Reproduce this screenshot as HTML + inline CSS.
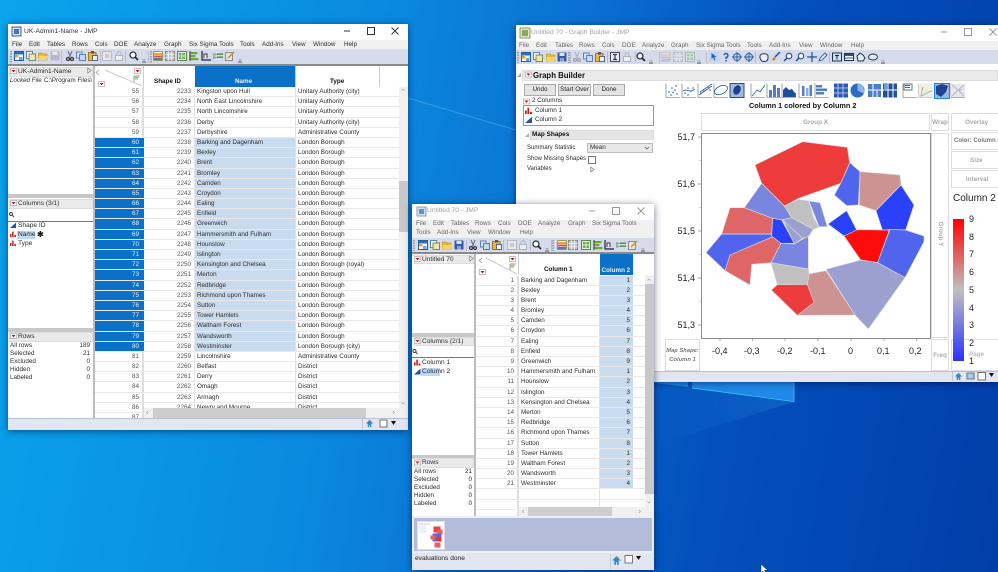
<!DOCTYPE html>
<html><head><meta charset="utf-8"><title>JMP</title>
<style>
html,body{margin:0;padding:0}
body{width:998px;height:572px;overflow:hidden;position:relative;font-family:"Liberation Sans",sans-serif;font-size:6.3px;color:#2c2c2c;background:linear-gradient(100deg,#0aa4ec 0,#0a8ae0 35%,#0a6ed0 55%,#0350bc 72%,#023eaa 100%)}
#p{position:absolute;left:0;top:0;width:998px;height:572px;filter:blur(.3px)}
.a,.t,.w{position:absolute}
.t{white-space:nowrap;line-height:10px;height:10px}
.w{background:#fff;box-shadow:0 1px 7px rgba(0,0,40,.55)}
.g{color:#a3a3a3}.b{font-weight:bold;color:#111}
.bar{position:absolute;background:#eaeaea;border:1px solid #ddd;box-sizing:border-box}
.box{position:absolute;border:1px solid #ddd;box-sizing:border-box;color:#aaa;text-align:center;font-weight:bold;background:#fff;display:flex;align-items:center;justify-content:center;font-size:6.3px}
.btn{position:absolute;background:#e4e4e4;border:1px solid #aaa;box-sizing:border-box;text-align:center;line-height:10px;height:12px;color:#222}
.rows{position:absolute;overflow:hidden}
.r{display:flex;box-sizing:border-box;border-bottom:1px solid #e9e9e9}
.r span{display:block;height:100%;box-sizing:border-box;white-space:nowrap;overflow:hidden}
.r1{height:10.19px;line-height:10.5px}
.r1 span:nth-child(1){width:49px;text-align:right;padding-right:3px;border-right:2px solid #ddd;color:#555}
.r1 span:nth-child(2){width:51px;text-align:right;padding-right:3px;color:#555;border-right:1px solid #e2e2e2}
.r1 span:nth-child(3){width:101px;padding-left:2px;border-right:1px solid #e2e2e2}
.r1 span:nth-child(4){width:104px;padding-left:2px}
.r3{height:10.2px;line-height:10.5px}
.r3 span:nth-child(1){width:43px;text-align:right;padding-right:3px;border-right:2px solid #ddd;color:#555}
.r3 span:nth-child(2){width:81px;padding-left:2px;border-right:1px solid #e2e2e2}
.r3 span:nth-child(3){width:33px;text-align:right;padding-right:3px;background:#c9dcef}
.s span:nth-child(1){background:#0a70c8;color:#e8f2fb;border-right-color:#0a70c8}
.s span:nth-child(3){background:#c9dcef}
svg{position:absolute;left:0;top:0;overflow:visible}
</style></head><body><div id="p">

<svg width="998" height="572" style="width:998px;height:572px">
<defs>
<linearGradient id="beam" x1="1" y1="0" x2="0" y2="0"><stop offset="0" stop-color="#3ca8f4" stop-opacity=".22"/><stop offset="1" stop-color="#3ca8f4" stop-opacity="0"/></linearGradient>
<symbol id="new" viewBox="0 0 10 10"><rect x="0.5" y="0.5" width="9" height="9" fill="#fff" stroke="#1f5f9f"/><rect x="1" y="1" width="8" height="2.5" fill="#2a6fb8"/><rect x="1" y="4" width="3.5" height="2.5" fill="#f0a030"/><rect x="5" y="6" width="3.5" height="3" fill="#6aa5da"/></symbol>
<symbol id="doc" viewBox="0 0 10 10"><rect x="0.5" y="0.5" width="6" height="7" fill="#fff" stroke="#5a87a8"/><rect x="3" y="3" width="6.5" height="6.5" fill="#f2e6a8" stroke="#7a8a60"/></symbol>
<symbol id="fold" viewBox="0 0 10 10"><path d="M0 2h4l1 1h4v6H0z" fill="#e9b83c" stroke="#b08a20" stroke-width=".6"/><path d="M1 5h9l-1.500 4H0z" fill="#f6d66a"/></symbol>
<symbol id="save" viewBox="0 0 10 10"><rect x="0.5" y="0.500" width="9" height="9" fill="#3a58a8"/><rect x="2.500" y="1" width="5" height="3" fill="#dfe7f5"/><rect x="3" y="6" width="4" height="3.500" fill="#8fa2cf"/></symbol>
<symbol id="saveg" viewBox="0 0 10 10"><rect x="0.5" y="0.500" width="9" height="9" fill="#b4bac8"/><rect x="2.500" y="1" width="5" height="3" fill="#e6e8ef"/></symbol>
<symbol id="cut" viewBox="0 0 10 10"><path d="M3 0l2.500 6M7 0L4.500 6" stroke="#667" stroke-width="1"/><circle cx="3" cy="8" r="1.500" fill="none" stroke="#334" stroke-width="1.200"/><circle cx="7" cy="8" r="1.500" fill="none" stroke="#334" stroke-width="1.200"/></symbol>
<symbol id="copy" viewBox="0 0 10 10"><rect x="0.500" y="1" width="5.500" height="6" fill="#dbe6f6" stroke="#5d7fb8"/><rect x="3.500" y="3.500" width="6" height="6" fill="#c6d8f2" stroke="#5d7fb8"/></symbol>
<symbol id="paste" viewBox="0 0 10 10"><rect x="0.500" y="1.500" width="7.500" height="8" fill="#e8b840" stroke="#9a7a20"/><rect x="3" y="0" width="3" height="2.500" fill="#555"/><rect x="4.500" y="4.500" width="5" height="5" fill="#eef2fb" stroke="#567"/></symbol>
<symbol id="gb" viewBox="0 0 10 10"><rect x="0.500" y="0.500" width="9" height="9" fill="#e8e8ee" stroke="#b8b8c0"/><rect x="3" y="3" width="4" height="4" fill="#c8c8d0"/></symbol>
<symbol id="dk" viewBox="0 0 10 10"><rect x="0.500" y="0.500" width="9" height="9" fill="#eef" stroke="#445"/><path d="M3 2.500h4M5 2.500v5M3 7.500h4" stroke="#334" stroke-width="1.200"/></symbol>
<symbol id="lock" viewBox="0 0 10 10"><rect x="1.500" y="4.500" width="7" height="5" fill="#eceef4" stroke="#b0b4be"/><path d="M3 4.500V2.500a2 2 0 0 1 4 0v2" fill="none" stroke="#b0b4be"/></symbol>
<symbol id="mag" viewBox="0 0 10 10"><circle cx="4" cy="4" r="3" fill="#fff" stroke="#223" stroke-width="1.200"/><path d="M6 6l3 3" stroke="#223" stroke-width="1.600"/></symbol>
<symbol id="dd" viewBox="0 0 10 10"><path d="M3 8h4" stroke="#555" stroke-width="1"/><path d="M3 5h4l-2 2z" fill="#aab"/></symbol>
<symbol id="t1" viewBox="0 0 10 10"><rect x="0.500" y="0.500" width="9" height="9" rx="1" fill="#fff" stroke="#995"/><rect x="1" y="2" width="8" height="2" fill="#f0a030"/><rect x="1" y="4.500" width="8" height="2" fill="#e05040"/><rect x="1" y="7" width="8" height="2" fill="#4a7ac0"/></symbol>
<symbol id="t2" viewBox="0 0 10 10"><rect x="0.500" y="0.500" width="9" height="9" fill="#c8c8cc" stroke="#888"/><path d="M0 3.500h10M0 6.500h10M3.500 0v10M6.500 0v10" stroke="#fff" stroke-width=".6"/></symbol>
<symbol id="t3" viewBox="0 0 10 10"><rect x="0.500" y="0.500" width="9" height="9" fill="#dfefd8" stroke="#5a8a50"/><rect x="2" y="2" width="2.500" height="2.500" fill="#6aaa5a"/><rect x="5.500" y="2" width="2.500" height="2.500" fill="#6aaa5a"/><rect x="2" y="5.500" width="2.500" height="2.500" fill="#6aaa5a"/><rect x="5.500" y="5.500" width="2.500" height="2.500" fill="#6aaa5a"/></symbol>
<symbol id="t4" viewBox="0 0 10 10"><path d="M1 0v10" stroke="#333"/><rect x="1.500" y="1" width="7" height="2.200" fill="#6aa83a"/><rect x="1.500" y="4" width="5" height="2.200" fill="#6aa83a"/><rect x="1.500" y="7" width="8" height="2.200" fill="#6aa83a"/></symbol>
<symbol id="t5" viewBox="0 0 10 10"><path d="M1 0v9h9" stroke="#223" fill="none" stroke-width="1.200"/><path d="M3 7V3h3v4" fill="#eef" stroke="#334"/></symbol>
<symbol id="t6" viewBox="0 0 10 10"><path d="M0 2l5 1.500L0 5zM0 5l5 1.500L0 8z" fill="#8a9"/><rect x="4" y="2.500" width="6" height="1.400" fill="#4a8a3a"/><rect x="4" y="5.500" width="6" height="1.400" fill="#4a8a3a"/></symbol>
<symbol id="t7" viewBox="0 0 10 10"><rect x="0.500" y="1.500" width="7" height="8" fill="#ece8d8" stroke="#889"/><path d="M3 7L9 1" stroke="#c09030" stroke-width="1.500"/></symbol>
<symbol id="ar" viewBox="0 0 10 10"><rect x="0" y="0" width="10" height="10" fill="#c4d6ee"/><path d="M2.500 1l5 4H5.200l1.300 3-1.200.5-1.200-3L2.500 7z" fill="#1e66b8"/></symbol>
<symbol id="q" viewBox="0 0 10 10"><path d="M3 3a2 2 0 1 1 2 2.500V7" fill="none" stroke="#1e5fb0" stroke-width="1.500"/><rect x="4.300" y="8" width="1.500" height="1.500" fill="#1e5fb0"/></symbol>
<symbol id="cr" viewBox="0 0 10 10"><circle cx="5" cy="5" r="3.500" fill="#cfe0f5" stroke="#2a5ea8"/><path d="M5 0v10M0 5h10" stroke="#2a5ea8"/></symbol>
<symbol id="hand" viewBox="0 0 10 10"><path d="M1 4c0-3 8-3 8 0v2c0 3-2 3.500-4 3.500S2 9 1 6z" fill="#eef" stroke="#234"/></symbol>
<symbol id="brush" viewBox="0 0 10 10"><path d="M9 0L4 5" stroke="#1e4f98" stroke-width="1.500"/><path d="M1 7c2-3 4-2 3.500 0S2 9.500 1 7z" fill="#c09030"/></symbol>
<symbol id="lens" viewBox="0 0 10 10"><circle cx="6" cy="4" r="2.800" fill="#fff" stroke="#1e4f98" stroke-width="1.100"/><path d="M4 6L1 9" stroke="#1e4f98" stroke-width="1.500"/></symbol>
<symbol id="plus" viewBox="0 0 10 10"><path d="M5 0v10M0 5h10" stroke="#1e4f98" stroke-width="1.200"/></symbol>
<symbol id="pen" viewBox="0 0 10 10"><path d="M1 9l1-3 5-5 2 2-5 5z" fill="#eef" stroke="#3a66a8"/></symbol>
<symbol id="T" viewBox="0 0 10 10"><rect x="0.500" y="1" width="9" height="8" fill="#cfe0f5" stroke="#234"/><path d="M3 3.500h4M5 3.500v4" stroke="#123"/></symbol>
<symbol id="ln" viewBox="0 0 10 10"><rect x="0.500" y="1.500" width="9" height="7" fill="#fff" stroke="#234"/><rect x="1" y="2" width="8" height="2" fill="#33558a"/><rect x="1" y="5.500" width="8" height="1" fill="#33558a"/></symbol>
<symbol id="po" viewBox="0 0 10 10"><path d="M1 4l3-3 3 2 2 3-2 3H2z" fill="#dfeaf8" stroke="#234"/></symbol>
<symbol id="ov" viewBox="0 0 10 10"><ellipse cx="5" cy="5" rx="4.500" ry="3" fill="#dfeaf8" stroke="#234"/></symbol>
<symbol id="min" viewBox="0 0 10 10"><path d="M2 5h6" stroke="#333"/></symbol>
<symbol id="max" viewBox="0 0 10 10"><rect x="1.500" y="1.500" width="7" height="7" fill="none" stroke="#333"/></symbol>
<symbol id="cls" viewBox="0 0 10 10"><path d="M1.500 1.500l7 7M8.500 1.500l-7 7" stroke="#333"/></symbol>
<symbol id="rm" viewBox="0 0 10 8"><rect x=".5" y=".5" width="9" height="7" fill="#fff" stroke="#aaa"/><path d="M2 2.500h6l-3 3.500z" fill="#d01020"/></symbol>
<symbol id="nom" viewBox="0 0 10 10"><rect x="0" y="5" width="2.500" height="5" fill="#d02010"/><rect x="3.500" y="1" width="2.500" height="9" fill="#d02010"/><rect x="7" y="7" width="3" height="3" fill="#d02010"/></symbol>
<symbol id="con" viewBox="0 0 10 10"><path d="M0 10L10 1v9z" fill="#2a50a8"/></symbol>
<symbol id="tri" viewBox="0 0 6 8"><path d="M1 1l4 3-4 3z" fill="#f4f4f4" stroke="#777" stroke-width=".8"/></symbol>
<symbol id="home" viewBox="0 0 10 10"><path d="M5 1L1 5h2v4h1.500V6.500h1V9H7V5h2z" fill="#2a88d0"/><path d="M5 1L7 3" stroke="#d9a030"/></symbol>
</defs>
<!-- wallpaper -->
<polygon points="408,98 516,130 516,260 408,260" fill="#2aa0f0" opacity=".06"/>
<line x1="408" y1="98" x2="516" y2="130" stroke="#7cc8f8" stroke-width="1" opacity=".4"/>
<polygon points="654,445 794,402 654,382" fill="url(#beam)"/>
<polygon points="654,382 688,382 688,387 654,383" fill="#2088e8"/>
<polygon points="692,382 794,382 794,401 692,388" fill="#2088e8"/>
<path d="M692 388L794 401.500V382" fill="none" stroke="#3cd0f8" stroke-width=".8"/>
<path d="M761 564v9l2-2 1.500 3 1.500-.7-1.500-3h3z" fill="#fff" stroke="#222" stroke-width=".5"/>
</svg>

<!-- ===== WINDOW 1 ===== -->
<div class="w" style="left:8px;top:24px;width:400px;height:406px"></div>
<div class="a" style="left:8px;top:40px;width:400px;height:9px;background:#f0f0f0"></div>
<div class="a" style="left:8px;top:49px;width:400px;height:15px;background:#d5dbea"></div>
<div class="a" style="left:8px;top:64px;width:400px;height:2px;background:#8a8a8a"></div>
<div class="a" style="left:93px;top:66px;width:2px;height:352px;background:#bdbdbd"></div>
<div class="t" style="left:24px;top:27px;color:#333;font-size:6.7px">UK-Admin1-Name - JMP</div>
<div class="t" style="left:12px;top:40px">File</div><div class="t" style="left:29px;top:40px">Edit</div><div class="t" style="left:47px;top:40px">Tables</div><div class="t" style="left:72px;top:40px">Rows</div><div class="t" style="left:95px;top:40px">Cols</div><div class="t" style="left:114px;top:40px">DOE</div><div class="t" style="left:134px;top:40px">Analyze</div><div class="t" style="left:164px;top:40px">Graph</div><div class="t" style="left:189px;top:40px">Six Sigma Tools</div><div class="t" style="left:240px;top:40px">Tools</div><div class="t" style="left:262px;top:40px">Add-Ins</div><div class="t" style="left:292px;top:40px">View</div><div class="t" style="left:313px;top:40px">Window</div><div class="t" style="left:344px;top:40px">Help</div>
<div class="a" style="left:95px;top:66px;width:49px;height:21px;background:#fff"></div>
<div class="t b" style="left:154px;top:77px">Shape ID</div>
<div class="a" style="left:195px;top:66px;width:100px;height:21px;background:#0a70c8"></div>
<div class="t b" style="left:235px;top:77px;color:#e8f2fb">Name</div>
<div class="t b" style="left:330px;top:77px">Type</div>
<div class="a" style="left:295px;top:66px;width:1px;height:21px;background:#ccc"></div>
<div class="a" style="left:379px;top:66px;width:1px;height:21px;background:#ccc"></div>
<div class="a" style="left:143px;top:66px;width:1px;height:21px;background:#ccc"></div>
<div class="rows" style="left:95px;top:87px;width:305px;height:331px">
<div class="r r1"><span>55</span><span>2233</span><span>Kingston upon Hull</span><span>Unitary Authority (city)</span></div>
<div class="r r1"><span>56</span><span>2234</span><span>North East Lincolnshire</span><span>Unitary Authority</span></div>
<div class="r r1"><span>57</span><span>2235</span><span>North Lincolnshire</span><span>Unitary Authority</span></div>
<div class="r r1"><span>58</span><span>2236</span><span>Derby</span><span>Unitary Authority (city)</span></div>
<div class="r r1"><span>59</span><span>2237</span><span>Derbyshire</span><span>Administrative County</span></div>
<div class="r r1 s"><span>60</span><span>2238</span><span>Barking and Dagenham</span><span>London Borough</span></div>
<div class="r r1 s"><span>61</span><span>2239</span><span>Bexley</span><span>London Borough</span></div>
<div class="r r1 s"><span>62</span><span>2240</span><span>Brent</span><span>London Borough</span></div>
<div class="r r1 s"><span>63</span><span>2241</span><span>Bromley</span><span>London Borough</span></div>
<div class="r r1 s"><span>64</span><span>2242</span><span>Camden</span><span>London Borough</span></div>
<div class="r r1 s"><span>65</span><span>2243</span><span>Croydon</span><span>London Borough</span></div>
<div class="r r1 s"><span>66</span><span>2244</span><span>Ealing</span><span>London Borough</span></div>
<div class="r r1 s"><span>67</span><span>2245</span><span>Enfield</span><span>London Borough</span></div>
<div class="r r1 s"><span>68</span><span>2246</span><span>Greenwich</span><span>London Borough</span></div>
<div class="r r1 s"><span>69</span><span>2247</span><span>Hammersmith and Fulham</span><span>London Borough</span></div>
<div class="r r1 s"><span>70</span><span>2248</span><span>Hounslow</span><span>London Borough</span></div>
<div class="r r1 s"><span>71</span><span>2249</span><span>Islington</span><span>London Borough</span></div>
<div class="r r1 s"><span>72</span><span>2250</span><span>Kensington and Chelsea</span><span>London Borough (royal)</span></div>
<div class="r r1 s"><span>73</span><span>2251</span><span>Merton</span><span>London Borough</span></div>
<div class="r r1 s"><span>74</span><span>2252</span><span>Redbridge</span><span>London Borough</span></div>
<div class="r r1 s"><span>75</span><span>2253</span><span>Richmond upon Thames</span><span>London Borough</span></div>
<div class="r r1 s"><span>76</span><span>2254</span><span>Sutton</span><span>London Borough</span></div>
<div class="r r1 s"><span>77</span><span>2255</span><span>Tower Hamlets</span><span>London Borough</span></div>
<div class="r r1 s"><span>78</span><span>2256</span><span>Waltham Forest</span><span>London Borough</span></div>
<div class="r r1 s"><span>79</span><span>2257</span><span>Wandsworth</span><span>London Borough</span></div>
<div class="r r1 s"><span>80</span><span>2258</span><span>Westminster</span><span>London Borough (city)</span></div>
<div class="r r1"><span>81</span><span>2259</span><span>Lincolnshire</span><span>Administrative County</span></div>
<div class="r r1"><span>82</span><span>2260</span><span>Belfast</span><span>District</span></div>
<div class="r r1"><span>83</span><span>2261</span><span>Derry</span><span>District</span></div>
<div class="r r1"><span>84</span><span>2262</span><span>Omagh</span><span>District</span></div>
<div class="r r1"><span>85</span><span>2263</span><span>Armagh</span><span>District</span></div>
<div class="r r1"><span>86</span><span>2264</span><span>Newry and Mourne</span><span>District</span></div>
<div class="r r1"><span>87</span><span></span><span></span><span></span></div>
</div>
<div class="a" style="left:399px;top:87px;width:9px;height:331px;background:#f0f0f0"></div>
<div class="a" style="left:399px;top:181px;width:9px;height:51px;background:#c8c8c8"></div>
<div class="a" style="left:144px;top:408px;width:264px;height:10px;background:#f0f0f0"></div>
<div class="a" style="left:153px;top:408px;width:213px;height:10px;background:#cdcdcd"></div>
<div class="a" style="left:8px;top:418px;width:400px;height:12px;background:#e1e6f0;border-top:1px solid #b8c0d4;box-sizing:border-box"></div>
<!-- left panel W1 -->
<div class="bar" style="left:9px;top:67px;width:84px;height:10px"></div>
<div class="t" style="left:18px;top:67px;font-size:6.6px">UK-Admin1-Name</div>
<div class="t" style="left:10px;top:76px;font-style:italic;font-size:6.2px">Locked File</div>
<div class="t" style="left:44px;top:76px;font-size:6.2px">C:\Program Files\</div>
<div class="a" style="left:8px;top:194px;width:85px;height:4px;background:#c8c8c8"></div>
<div class="bar" style="left:9px;top:199px;width:84px;height:10px"></div>
<div class="t" style="left:18px;top:199px;font-size:6.6px">Columns (3/1)</div>
<div class="a" style="left:8px;top:221px;width:85px;height:1px;background:#777"></div>
<div class="a" style="left:17px;top:231px;width:18px;height:8px;background:#bcd9f5"></div>
<div class="t" style="left:18px;top:221px;font-size:6.6px">Shape ID</div>
<div class="t" style="left:18px;top:230px;font-size:6.6px">Name</div>
<div class="t" style="left:37px;top:229.500px;font-size:8px;font-weight:bold;color:#222">✱</div>
<div class="t" style="left:18px;top:239px;font-size:6.6px">Type</div>
<div class="a" style="left:8px;top:328px;width:85px;height:4px;background:#c8c8c8"></div>
<div class="bar" style="left:9px;top:332px;width:84px;height:10px"></div>
<div class="t" style="left:18px;top:332px;font-size:6.6px">Rows</div>
<div class="t" style="left:10px;top:341px">All rows</div><div class="t" style="right:908px;top:341px">189</div>
<div class="t" style="left:10px;top:349px">Selected</div><div class="t" style="right:908px;top:349px">21</div>
<div class="t" style="left:10px;top:357px">Excluded</div><div class="t" style="right:908px;top:357px">0</div>
<div class="t" style="left:10px;top:365px">Hidden</div><div class="t" style="right:908px;top:365px">0</div>
<div class="t" style="left:10px;top:373px">Labeled</div><div class="t" style="right:908px;top:373px">0</div>

<svg width="998" height="572" style="width:998px;height:572px;pointer-events:none">
<rect x="12" y="27" width="9" height="9" fill="#cfe2f3" stroke="#557"/><rect x="14" y="29" width="5" height="5" fill="#3a78b8"/>
<use href="#min" x="342" y="26" width="10" height="10"/><use href="#max" x="366" y="26" width="10" height="10"/><use href="#cls" x="390" y="26" width="10" height="10"/>
<path d="M11 51v12" stroke="#666" stroke-dasharray="1.500 1"/><path d="M151 51v12" stroke="#666" stroke-dasharray="1.500 1"/>
<path d="M61.500 51v12M100.500 51v12M125.500 51v12M148.500 51v12" stroke="#b8bccb"/>
<use href="#new" x="14" y="51" width="10" height="10"/><use href="#doc" x="26" y="51" width="10" height="10"/><use href="#fold" x="38" y="51" width="10" height="10"/><use href="#saveg" x="50" y="51" width="10" height="10"/><use href="#cut" x="65" y="51" width="10" height="10"/><use href="#copy" x="76" y="51" width="10" height="10"/><use href="#paste" x="88" y="51" width="10" height="10"/><use href="#gb" x="102" y="51" width="10" height="10"/><use href="#lock" x="114" y="51" width="10" height="10"/><use href="#mag" x="129" y="51" width="10" height="10"/><use href="#dd" x="139" y="54" width="10" height="10"/>
<use href="#t1" x="153" y="51" width="10" height="10"/><use href="#t2" x="165" y="51" width="10" height="10"/><use href="#t3" x="177" y="51" width="10" height="10"/><use href="#t4" x="189" y="51" width="10" height="10"/><use href="#t5" x="201" y="51" width="10" height="10"/><use href="#t6" x="213" y="51" width="10" height="10"/><use href="#t7" x="225" y="51" width="10" height="10"/><use href="#dd" x="235" y="54" width="10" height="10"/>
<use href="#rm" x="10" y="68" width="7" height="6"/><use href="#tri" x="87" y="67" width="5" height="7"/>
<use href="#rm" x="10" y="200" width="7" height="6"/><use href="#rm" x="10" y="333" width="7" height="6"/>
<circle cx="11" cy="214" r="1.500" fill="none" stroke="#345"/><path d="M12 215l2 2" stroke="#345"/>
<use href="#con" x="10" y="222" width="6" height="6"/><use href="#nom" x="10" y="231" width="6" height="6"/><use href="#nom" x="10" y="240" width="6" height="6"/>
<path d="M99 70l-3 2.500 3 2.500" fill="#fff" stroke="#999" stroke-width=".8"/><path d="M105 70l37 16" stroke="#ccc"/>
<use href="#rm" x="134" y="68" width="7" height="6"/><use href="#rm" x="98" y="81" width="7" height="6"/>
<path d="M134 76v6M134 76h5l-1.500 1.500H134M134 79h4" stroke="#a8b890" stroke-width="1.200" fill="none"/>
<path d="M403 89l-1.500 1.500M403 89l1.500 1.500M403 404l-1.500-1.500M403 404l1.500-1.500M148 411l-1.500 1.500 1.500 1.500M393 411l1.500 1.500-1.500 1.500" stroke="#999" fill="none" stroke-width=".6"/>
<path d="M362.500 419v10" stroke="#c0c8d8"/>
<use href="#home" x="365" y="419" width="9" height="9"/><rect x="380" y="420" width="7" height="7" fill="#fff" stroke="#777"/><path d="M391 421h5l-2.500 4z" fill="#111"/>
</svg>

<!-- ===== WINDOW 2 ===== -->
<div class="w" style="left:516px;top:25px;width:482px;height:357px"></div>
<div class="a" style="left:516px;top:41px;width:482px;height:9px;background:#f0f0f0"></div>
<div class="a" style="left:516px;top:50px;width:482px;height:14px;background:#d5dbea"></div>
<div class="t g" style="left:531px;top:28px;font-size:6.7px">Untitled 70 - Graph Builder - JMP</div>
<div class="t" style="left:519px;top:40.500px;color:#666">File</div><div class="t" style="left:536px;top:40.500px;color:#666">Edit</div><div class="t" style="left:555px;top:40.500px;color:#666">Tables</div><div class="t" style="left:579px;top:40.500px;color:#666">Rows</div><div class="t" style="left:602px;top:40.500px;color:#666">Cols</div><div class="t" style="left:622px;top:40.500px;color:#666">DOE</div><div class="t" style="left:642px;top:40.500px;color:#666">Analyze</div><div class="t" style="left:671px;top:40.500px;color:#666">Graph</div><div class="t" style="left:696px;top:40.500px;color:#666">Six Sigma Tools</div><div class="t" style="left:747px;top:40.500px;color:#666">Tools</div><div class="t" style="left:769px;top:40.500px;color:#666">Add-Ins</div><div class="t" style="left:799px;top:40.500px;color:#666">View</div><div class="t" style="left:820px;top:40.500px;color:#666">Window</div><div class="t" style="left:851px;top:40.500px;color:#666">Help</div>
<div class="bar" style="left:522px;top:70px;width:476px;height:11px"></div>
<div class="t" style="left:533px;top:70.500px;font-weight:bold;color:#111;font-size:7.8px">Graph Builder</div>
<div class="btn" style="left:524px;top:84px;width:32px">Undo</div>
<div class="btn" style="left:558px;top:84px;width:33px">Start Over</div>
<div class="btn" style="left:593px;top:84px;width:32px">Done</div>
<div class="t" style="left:532px;top:96px">2 Columns</div>
<div class="a" style="left:523px;top:105px;width:131px;height:21px;border:1px solid #999;box-sizing:border-box"></div>
<div class="t" style="left:535px;top:106px">Column 1</div>
<div class="t" style="left:535px;top:115px">Column 2</div>
<div class="bar" style="left:530px;top:130px;width:124px;height:10px;background:#e6e6e6"></div>
<div class="t b" style="left:532px;top:130px;font-size:6.4px">Map Shapes</div>
<div class="t" style="left:527px;top:143px;font-size:6px">Summary Statistic</div>
<div class="a" style="left:587px;top:143px;width:66px;height:10px;background:#e8e8e8;border:1px solid #bbb;box-sizing:border-box"></div>
<div class="t" style="left:590px;top:143px">Mean</div>
<div class="t" style="left:527px;top:154px;font-size:6px">Show Missing Shapes</div>
<div class="a" style="left:588px;top:156px;width:8px;height:8px;background:#fff;border:1px solid #777;box-sizing:border-box"></div>
<div class="t" style="left:527px;top:164px;font-size:6px">Variables</div>
<div class="t b" style="left:749px;top:101px;font-size:7.3px">Column 1 colored by Column 2</div>
<div class="box" style="left:701px;top:113px;width:229px;height:18px">Group X</div>
<div class="box" style="left:931px;top:113px;width:18px;height:18px">Wrap</div>
<div class="box" style="left:951px;top:113px;width:50px;height:18px;justify-content:flex-start;padding-left:13px">Overlay</div>
<div class="box" style="left:951px;top:132px;width:50px;height:18px;justify-content:flex-start;padding-left:2px;color:#777;font-size:6px;white-space:nowrap;overflow:hidden">Color: Column 2</div>
<div class="box" style="left:951px;top:151px;width:50px;height:18px;justify-content:flex-start;padding-left:18px">Size</div>
<div class="box" style="left:951px;top:170px;width:50px;height:18px;justify-content:flex-start;padding-left:14px">Interval</div>
<div class="a" style="left:931px;top:133px;width:18px;height:205px;border:1px solid #ddd;box-sizing:border-box"></div>
<div class="t" style="left:921px;top:229px;color:#aaa;font-weight:bold;transform:rotate(90deg);width:38px;text-align:center">Group Y</div>
<div class="t" style="left:953px;top:194px;font-size:10px;color:#222">Column 2</div>
<div class="a" style="left:700.500px;top:132.500px;width:230px;height:206px;border:1px solid #8c8c8c;box-sizing:border-box;background:#fff"></div>
<div class="t" style="right:303px;top:132px;font-size:9px;color:#222">51,7</div>
<div class="t" style="right:303px;top:179px;font-size:9px;color:#222">51,6</div>
<div class="t" style="right:303px;top:226px;font-size:9px;color:#222">51,5</div>
<div class="t" style="right:303px;top:273px;font-size:9px;color:#222">51,4</div>
<div class="t" style="right:303px;top:320px;font-size:9px;color:#222">51,3</div>
<div class="t" style="left:712px;top:346px;font-size:9px;color:#222">-0,4</div>
<div class="t" style="left:744px;top:346px;font-size:9px;color:#222">-0,3</div>
<div class="t" style="left:777px;top:346px;font-size:9px;color:#222">-0,2</div>
<div class="t" style="left:810px;top:346px;font-size:9px;color:#222">-0,1</div>
<div class="t" style="left:848px;top:346px;font-size:9px;color:#222">0</div>
<div class="t" style="left:877px;top:346px;font-size:9px;color:#222">0,1</div>
<div class="t" style="left:909px;top:346px;font-size:9px;color:#222">0,2</div>
<div class="box" style="left:665px;top:339px;width:35px;height:32px;font-style:italic;color:#777;line-height:9px;font-size:5.800px;white-space:nowrap;display:block;padding-top:7px">Map Shape:<br>Column 1</div>
<div class="box" style="left:931px;top:339px;width:18px;height:32px;">Freq</div>
<div class="a" style="left:951px;top:339px;width:47px;height:32px;border:1px solid #ddd;border-right:0;box-sizing:border-box"></div>
<div class="t" style="left:969px;top:350px;color:#bbb;font-weight:bold">Page</div>
<div class="a" style="left:953px;top:219px;width:11px;height:142px;background:linear-gradient(#ff0000,#c0c0c0 50%,#2a30ff)"></div>
<div class="t" style="left:969px;top:214px;font-size:9px;color:#222">9</div><div class="t" style="left:969px;top:232px;font-size:9px;color:#222">8</div><div class="t" style="left:969px;top:249px;font-size:9px;color:#222">7</div><div class="t" style="left:969px;top:267px;font-size:9px;color:#222">6</div><div class="t" style="left:969px;top:285px;font-size:9px;color:#222">5</div><div class="t" style="left:969px;top:303px;font-size:9px;color:#222">4</div><div class="t" style="left:969px;top:320px;font-size:9px;color:#222">3</div><div class="t" style="left:969px;top:338px;font-size:9px;color:#222">2</div><div class="t" style="left:969px;top:356px;font-size:9px;color:#222">1</div>
<div class="a" style="left:654px;top:371px;width:344px;height:11px;background:#e1e6f0;border-top:1px solid #b8c0d4;box-sizing:border-box"></div>

<svg width="998" height="572" style="width:998px;height:572px;pointer-events:none">
<rect x="520" y="28" width="10" height="10" fill="#d8e8c0" stroke="#8a9a70"/><rect x="522" y="30" width="6" height="6" fill="#88a860"/>
<use href="#min" x="939" y="27" width="10" height="10" opacity=".5"/><use href="#max" x="963" y="27" width="10" height="10" opacity=".5"/><use href="#cls" x="988" y="27" width="10" height="10" opacity=".5"/>
<path d="M518 52v11M569 52v11" stroke="#666" stroke-dasharray="1.500 1"/>
<path d="M570.500 52v11M607.500 52v11M635.500 52v11M659.500 52v11M706.500 52v11M755.500 52v11M829.500 52v11" stroke="#b8bccb"/>
<use href="#new" x="521" y="52" width="10" height="10"/><use href="#doc" x="533" y="52" width="10" height="10"/><use href="#fold" x="546" y="52" width="10" height="10"/><use href="#save" x="557" y="52" width="10" height="10"/><use href="#cut" x="572" y="52" width="10" height="10" opacity=".35"/><use href="#copy" x="583" y="52" width="10" height="10"/><use href="#paste" x="595" y="52" width="10" height="10"/><use href="#dk" x="610" y="52" width="10" height="10"/><use href="#lock" x="622" y="52" width="10" height="10"/><use href="#mag" x="636" y="52" width="10" height="10"/><use href="#dd" x="646" y="55" width="10" height="10"/>
<use href="#t1" x="661" y="52" width="10" height="10" opacity=".25"/><use href="#t2" x="673" y="52" width="10" height="10" opacity=".35"/><use href="#t3" x="685" y="52" width="10" height="10" opacity=".4"/><use href="#dd" x="694" y="55" width="10" height="10"/>
<use href="#ar" x="709" y="52" width="10" height="10"/><use href="#q" x="721" y="52" width="10" height="10"/><use href="#cr" x="732" y="52" width="10" height="10"/><use href="#cr" x="744" y="52" width="10" height="10"/><use href="#hand" x="759" y="52" width="10" height="10"/><use href="#brush" x="771" y="52" width="10" height="10"/><use href="#lens" x="783" y="52" width="10" height="10"/><use href="#lens" x="795" y="52" width="10" height="10"/><use href="#plus" x="807" y="52" width="10" height="10"/><use href="#pen" x="818" y="52" width="10" height="10"/><use href="#T" x="832" y="52" width="10" height="10"/><use href="#ln" x="844" y="52" width="10" height="10"/><use href="#po" x="856" y="52" width="10" height="10"/><use href="#ov" x="868" y="52" width="10" height="10"/><use href="#dd" x="878" y="55" width="10" height="10"/>
<path d="M517 77l4-4v4z" fill="#aaa"/><use href="#rm" x="525" y="71.500" width="7" height="6"/>
<use href="#rm" x="523" y="98.500" width="7" height="6"/><use href="#nom" x="525" y="107" width="7" height="7"/><use href="#con" x="525" y="116" width="7" height="7"/>
<path d="M525 137l4-4v4z" fill="#aaa"/>
<path d="M645 147l2 2 2-2" stroke="#555" fill="none" stroke-width=".7"/><use href="#tri" x="590" y="166" width="5" height="7"/>
<!-- graph type icons -->
<g fill="none" stroke="#666" stroke-width=".6">
<path d="M666 83.500v14h14M682 83.500v14h14M698 83.500v14h14M714 83.500v14h14M751 83.500v14h14M767 83.500v14h14M782 83.500v14h14M799 83.500v14h14M815 83.500v14h14M903 83.500v14h14M919 83.500v14h14M951 83.500v14h14"/></g>
<g fill="#2b5fb5">
<circle cx="669" cy="92" r=".8"/><circle cx="672" cy="88" r=".8"/><circle cx="675" cy="90" r=".8"/><circle cx="671" cy="95" r=".8"/><circle cx="677" cy="94" r=".8"/><circle cx="676" cy="86" r=".8"/><circle cx="673" cy="92.500" r=".8"/>
<circle cx="685" cy="93" r=".8"/><circle cx="688" cy="88" r=".8"/><circle cx="691" cy="91" r=".8"/><circle cx="693" cy="88" r=".8"/><circle cx="688" cy="95" r=".8"/>
<circle cx="701" cy="93" r=".8"/><circle cx="704" cy="91" r=".8"/><circle cx="708" cy="87" r=".8"/><circle cx="710" cy="90" r=".8"/>
</g>
<g fill="none" stroke="#2b5fb5" stroke-width=".8"><path d="M683 91c4-3 6 3 12-2M699 95l13-9M700 92l12-8"/><ellipse cx="721" cy="90" rx="7" ry="4" transform="rotate(-25 721 90)"/><path d="M752 96l5-6 3 2 5-7"/></g>
<rect x="730" y="83.500" width="14" height="14" fill="#9fbce4"/><ellipse cx="737" cy="90" rx="3.500" ry="5" transform="rotate(25 737 90)" fill="#1d3f8a"/><rect x="730" y="83.500" width="14" height="14" fill="none" stroke="#446"/>
<g fill="#4f7fc8"><rect x="769" y="90" width="3" height="7"/><rect x="773" y="85" width="3" height="12"/><rect x="777" y="88" width="3" height="9"/><rect x="784" y="93" width="12" height="4" fill="#2b5fb5"/><path d="M783 97v-7l3-3 3 3 3-1 3 4v4z" fill="#1f4f9a"/><rect x="802" y="86" width="2.500" height="10"/><rect x="806" y="88" width="2.500" height="8" fill="#8aaee0"/><rect x="809.500" y="85" width="2.500" height="11"/><rect x="816" y="85" width="6" height="2.500"/><rect x="816" y="88.500" width="11" height="2.500"/><rect x="816" y="92" width="8" height="2.500"/></g>
<g><rect x="834" y="83.500" width="14" height="14" fill="#2d5ab0"/><path d="M838 83.500v14M843 83.500v14M834 88h14M834 93h14" stroke="#a9c4e8"/><circle cx="857.500" cy="90.500" r="7" fill="#2b6cc4"/><path d="M857.500 90.500V83.500a7 7 0 0 1 6 10z" fill="#8ab4ea"/><rect x="868" y="84" width="13" height="13" fill="#4e7fc4"/><path d="M873 84v13M868 90h13M877 90v7" stroke="#fff"/><rect x="883" y="83.500" width="14" height="14" fill="#1f4f9a"/><path d="M888 83.500v14M893 83.500v14M883 90h14" stroke="#fff"/><rect x="884" y="84" width="3" height="5" fill="#6f9fe0"/></g>
<rect x="904" y="84" width="8" height="6" fill="#fff" stroke="#678"/><path d="M905 85.500h5M905 87.500h5" stroke="#467"/>
<rect x="919" y="83.500" width="14" height="14" fill="#eef0e6"/><text x="921" y="93" font-family="Liberation Serif,serif" font-size="8" font-style="italic" fill="#c89030">f</text><path d="M920 96c4 0 6-4 12-5" stroke="#aab" fill="none"/>
<rect x="934.500" y="83.500" width="15" height="15" fill="#9eb7dc" stroke="#1e88e0" stroke-width="1"/><path d="M936 86l6-2 6 2-2 6-5 5-5-3z" fill="#1f4390"/>
<rect x="951" y="84" width="14" height="13" fill="#e6e8ec"/><path d="M952 85l6 5-6 6M964 85l-6 5 6 6M958 90h4" stroke="#b0b6c0" fill="none"/>
<!-- ticks -->
<g stroke="#888" stroke-width=".7"><path d="M698 137h3M698 184h3M698 231h3M698 278h3M698 325h3M699.500 160.500h1M699.500 207.500h1M699.500 254.500h1M699.500 301.500h1"/><path d="M720 339v2M752.500 339v2M785 339v2M818 339v2M851 339v2M884 339v2M916.500 339v2"/></g>
<!-- map -->
<g transform="translate(700,130) scale(.33333)" stroke="#dcdcdc" stroke-width="2" stroke-linejoin="round">
<polygon fill="#ee3b3b" points="165,105 308,35 442,52 449,98 422,160 296,205 253,228 185,160"/>
<polygon fill="#5064ee" points="450,98 480,125 475,225 440,227 403,195 422,160"/>
<polygon fill="#cd9292" points="480,125 600,135 603,165 528,242 478,225"/>
<polygon fill="#2a40fb" points="603,165 642,225 617,300 570,298 548,303 528,242"/>
<polygon fill="#fe0b0b" points="432,318 470,299 568,300 533,398 482,390"/>
<polygon fill="#5064ee" points="570,298 617,300 672,318 672,335 615,443 533,398"/>
<polygon fill="#9ca0d0" points="378,418 482,390 533,398 615,443 505,597 465,555"/>
<polygon fill="#cd9292" points="325,432 378,422 465,555 292,556 342,517 322,463"/>
<polygon fill="#ee3b3b" points="214,480 232,464 322,463 342,517 292,556"/>
<polygon fill="#c0c0c0" points="213,398 325,417 328,432 322,463 232,464"/>
<polygon fill="#7a85df" points="243,340 283,342 325,318 325,417 213,398"/>
<polygon fill="#de6666" points="90,375 218,320 243,340 213,398 155,403 150,465 75,422"/>
<polygon fill="#5064ee" points="65,312 215,312 218,320 90,375 75,422 18,368"/>
<polygon fill="#de6666" points="90,233 133,233 218,265 215,312 65,312"/>
<polygon fill="#7a85df" points="133,233 185,160 253,228 275,263 245,270 218,265"/>
<polygon fill="#2a40fb" points="218,265 245,270 283,340 243,340 215,318"/>
<polygon fill="#c0c0c0" points="253,228 296,208 327,213 340,260 357,292 340,298 275,263"/>
<polygon fill="#9ca0d0" points="245,270 275,263 340,298 325,320 308,325"/>
<polygon fill="#9ca0d0" points="250,272 308,325 283,342"/>
<polygon fill="#7a85df" points="327,213 360,218 382,290 357,290"/>
<polygon fill="#2a40fb" points="384,282 440,242 470,300 432,318"/>
</g>
<path d="M952.500 372v9" stroke="#c0c8d8"/>
<use href="#home" x="954" y="372" width="9" height="9"/><rect x="967" y="373" width="7" height="6" fill="#a8c8e8" stroke="#678"/><rect x="978" y="372.500" width="7.500" height="7.500" fill="#fff" stroke="#777"/><path d="M989 373h5l-2.500 4z" fill="#111"/>
</svg>

<!-- ===== WINDOW 3 ===== -->
<div class="w" style="left:412px;top:204px;width:242px;height:366px"></div>
<div class="a" style="left:412px;top:220px;width:242px;height:18px;background:#f0f0f0"></div>
<div class="a" style="left:412px;top:238px;width:242px;height:14px;background:#d5dbea"></div>
<div class="a" style="left:412px;top:252px;width:242px;height:2px;background:#8a8a8a"></div>
<div class="a" style="left:474px;top:254px;width:2px;height:264px;background:#bdbdbd"></div>
<div class="t g" style="left:427px;top:206px;font-size:6.7px">Untitled 70 - JMP</div>
<div class="t" style="left:416px;top:219px;color:#666">File</div><div class="t" style="left:433px;top:219px;color:#666">Edit</div><div class="t" style="left:451px;top:219px;color:#666">Tables</div><div class="t" style="left:475px;top:219px;color:#666">Rows</div><div class="t" style="left:498px;top:219px;color:#666">Cols</div><div class="t" style="left:518px;top:219px;color:#666">DOE</div><div class="t" style="left:538px;top:219px;color:#666">Analyze</div><div class="t" style="left:568px;top:219px;color:#666">Graph</div><div class="t" style="left:592px;top:219px;color:#666">Six Sigma Tools</div>
<div class="t" style="left:416px;top:228px;color:#666">Tools</div><div class="t" style="left:437px;top:228px;color:#666">Add-Ins</div><div class="t" style="left:467px;top:228px;color:#666">View</div><div class="t" style="left:488px;top:228px;color:#666">Window</div><div class="t" style="left:520px;top:228px;color:#666">Help</div>
<div class="a" style="left:518px;top:254px;width:1px;height:21px;background:#ccc"></div>
<div class="t b" style="left:544px;top:265px">Column 1</div>
<div class="a" style="left:600px;top:254px;width:33px;height:21px;background:#0a70c8"></div>
<div class="t b" style="left:601.500px;top:266px;color:#e8f2fb">Column 2</div>
<div class="rows" style="left:476px;top:275.500px;width:169px;height:243px">
<div class="r r3"><span>1</span><span>Barking and Dagenham</span><span>1</span></div>
<div class="r r3"><span>2</span><span>Bexley</span><span>2</span></div>
<div class="r r3"><span>3</span><span>Brent</span><span>3</span></div>
<div class="r r3"><span>4</span><span>Bromley</span><span>4</span></div>
<div class="r r3"><span>5</span><span>Camden</span><span>5</span></div>
<div class="r r3"><span>6</span><span>Croydon</span><span>6</span></div>
<div class="r r3"><span>7</span><span>Ealing</span><span>7</span></div>
<div class="r r3"><span>8</span><span>Enfield</span><span>8</span></div>
<div class="r r3"><span>9</span><span>Greenwich</span><span>9</span></div>
<div class="r r3"><span>10</span><span>Hammersmith and Fulham</span><span>1</span></div>
<div class="r r3"><span>11</span><span>Hounslow</span><span>2</span></div>
<div class="r r3"><span>12</span><span>Islington</span><span>3</span></div>
<div class="r r3"><span>13</span><span>Kensington and Chelsea</span><span>4</span></div>
<div class="r r3"><span>14</span><span>Merton</span><span>5</span></div>
<div class="r r3"><span>15</span><span>Redbridge</span><span>6</span></div>
<div class="r r3"><span>16</span><span>Richmond upon Thames</span><span>7</span></div>
<div class="r r3"><span>17</span><span>Sutton</span><span>8</span></div>
<div class="r r3"><span>18</span><span>Tower Hamlets</span><span>1</span></div>
<div class="r r3"><span>19</span><span>Waltham Forest</span><span>2</span></div>
<div class="r r3"><span>20</span><span>Wandsworth</span><span>3</span></div>
<div class="r r3"><span>21</span><span>Westminster</span><span>4</span></div>
<div class="r r3"><span></span><span></span><span style="background:#fff"></span></div>
<div class="r r3"><span></span><span></span><span style="background:#fff"></span></div>
<div class="r r3"><span></span><span></span><span style="background:#fff"></span></div>
</div>
<div class="a" style="left:645px;top:275px;width:9px;height:233px;background:#f0f0f0"></div>
<div class="a" style="left:645px;top:284px;width:9px;height:210px;background:#c8c8c8"></div>
<div class="a" style="left:519px;top:507px;width:135px;height:10px;background:#f0f0f0"></div>
<div class="a" style="left:528px;top:507px;width:84px;height:10px;background:#cdcdcd"></div>
<div class="bar" style="left:414px;top:255px;width:60px;height:9px"></div>
<div class="t" style="left:422px;top:255px;font-size:6.6px">Untitled 70</div>
<div class="a" style="left:412px;top:333px;width:62px;height:4px;background:#c8c8c8"></div>
<div class="bar" style="left:414px;top:337px;width:60px;height:9px"></div>
<div class="t" style="left:422px;top:337px;font-size:6.6px">Columns (2/1)</div>
<div class="a" style="left:412px;top:357px;width:62px;height:1px;background:#777"></div>
<div class="a" style="left:421px;top:367.500px;width:19px;height:8px;background:#bcd9f5"></div>
<div class="t" style="left:422px;top:358px;font-size:6.6px">Column 1</div>
<div class="t" style="left:422px;top:366.500px;font-size:6.6px">Column 2</div>
<div class="a" style="left:412px;top:455px;width:62px;height:4px;background:#c8c8c8"></div>
<div class="bar" style="left:414px;top:458px;width:60px;height:10px"></div>
<div class="t" style="left:422px;top:458px;font-size:6.6px">Rows</div>
<div class="t" style="left:414px;top:467px">All rows</div><div class="t" style="right:526px;top:467px">21</div>
<div class="t" style="left:414px;top:475px">Selected</div><div class="t" style="right:526px;top:475px">0</div>
<div class="t" style="left:414px;top:483px">Excluded</div><div class="t" style="right:526px;top:483px">0</div>
<div class="t" style="left:414px;top:491px">Hidden</div><div class="t" style="right:526px;top:491px">0</div>
<div class="t" style="left:414px;top:499px">Labeled</div><div class="t" style="right:526px;top:499px">0</div>
<div class="a" style="left:412px;top:516px;width:242px;height:37px;background:#eef0f6"></div>
<div class="a" style="left:414px;top:518px;width:238px;height:33px;background:#b4bcdc"></div>
<div class="a" style="left:417px;top:521px;width:26px;height:27px;background:#fff;border:1px solid #dde"></div>
<div class="a" style="left:412px;top:553px;width:242px;height:17px;background:#e1e6f0"></div>
<div class="t" style="left:415px;top:554px;color:#222;font-size:6.6px">evaluations done</div>

<svg width="998" height="572" style="width:998px;height:572px;pointer-events:none">
<rect x="417" y="207" width="9" height="9" fill="#cfe2f3" stroke="#99a"/><rect x="419" y="209" width="5" height="5" fill="#5a98c8"/>
<use href="#min" x="587" y="206" width="10" height="10" opacity=".5"/><use href="#max" x="611" y="206" width="10" height="10" opacity=".5"/><use href="#cls" x="636" y="206" width="10" height="10" opacity=".5"/>
<path d="M414 240v11M553 240v11" stroke="#666" stroke-dasharray="1.500 1"/>
<path d="M466.500 240v11M503.500 240v11M530.500 240v11M551.500 240v11" stroke="#b8bccb"/>
<use href="#new" x="418" y="240" width="10" height="10"/><use href="#doc" x="430" y="240" width="10" height="10"/><use href="#fold" x="442" y="240" width="10" height="10"/><use href="#save" x="454" y="240" width="10" height="10"/><use href="#cut" x="468" y="240" width="10" height="10"/><use href="#copy" x="480" y="240" width="10" height="10"/><use href="#paste" x="492" y="240" width="10" height="10"/><use href="#gb" x="507" y="240" width="10" height="10"/><use href="#lock" x="518" y="240" width="10" height="10"/><use href="#mag" x="532" y="240" width="10" height="10"/><use href="#dd" x="542" y="243" width="10" height="10"/>
<use href="#t1" x="557" y="240" width="10" height="10"/><use href="#t2" x="568" y="240" width="10" height="10"/><use href="#t3" x="581" y="240" width="10" height="10"/><use href="#t4" x="593" y="240" width="10" height="10"/><use href="#t5" x="604" y="240" width="10" height="10"/><use href="#t6" x="616" y="240" width="10" height="10"/><use href="#t7" x="628" y="240" width="10" height="10"/><use href="#dd" x="638" y="243" width="10" height="10"/>
<use href="#rm" x="414" y="256" width="7" height="6"/><use href="#tri" x="469" y="255" width="5" height="7"/><use href="#rm" x="414" y="338" width="7" height="6"/><use href="#rm" x="414" y="459.500" width="7" height="6"/>
<circle cx="414.500" cy="351" r="1.500" fill="none" stroke="#345"/><path d="M415.500 352l2 2" stroke="#345"/>
<use href="#nom" x="414" y="359" width="6.500" height="6.500"/><use href="#con" x="414" y="368" width="6.500" height="6.500"/>
<path d="M482 258l-3 2.500 3 2.500" fill="#fff" stroke="#999" stroke-width=".8"/><path d="M486 258l31 16" stroke="#ccc"/>
<use href="#rm" x="509" y="256" width="7" height="6"/><use href="#rm" x="479" y="269" width="7" height="6"/>
<path d="M510 264v6M510 264h5l-1.500 1.500H510M510 267h4" stroke="#a8b890" stroke-width="1.200" fill="none"/>
<path d="M649 279l-1.500 1.500M649 279l1.500 1.500M649 503l-1.500-1.500M649 503l1.500-1.500M524 510l-1.500 1.500 1.500 1.500M639 510l1.500 1.500-1.500 1.500" stroke="#999" fill="none" stroke-width=".6"/>
<!-- thumbnail -->
<g transform="translate(417.500,521.500)"><rect x="1" y="2" width="12" height="1" fill="#ccd"/><rect x="1" y="4" width="8" height="8" fill="#eef0f8"/><rect x="16" y="5" width="7" height="6" fill="#e84040"/><rect x="19" y="8" width="6" height="5" fill="#e86060"/><rect x="15" y="12" width="9" height="8" fill="#5a68e8"/><rect x="19" y="15" width="5" height="5" fill="#e83030"/><rect x="17" y="21" width="6" height="5" fill="#e86060"/><rect x="13" y="14" width="5" height="4" fill="#e86060"/></g>
<path d="M610.500 554v15" stroke="#c4cad8"/>
<use href="#home" x="611" y="555" width="11" height="11"/><rect x="625" y="555.500" width="7.500" height="7.500" fill="#fff" stroke="#777"/><path d="M636 556h5l-2.500 4z" fill="#111"/>
</svg>
</div></body></html>
